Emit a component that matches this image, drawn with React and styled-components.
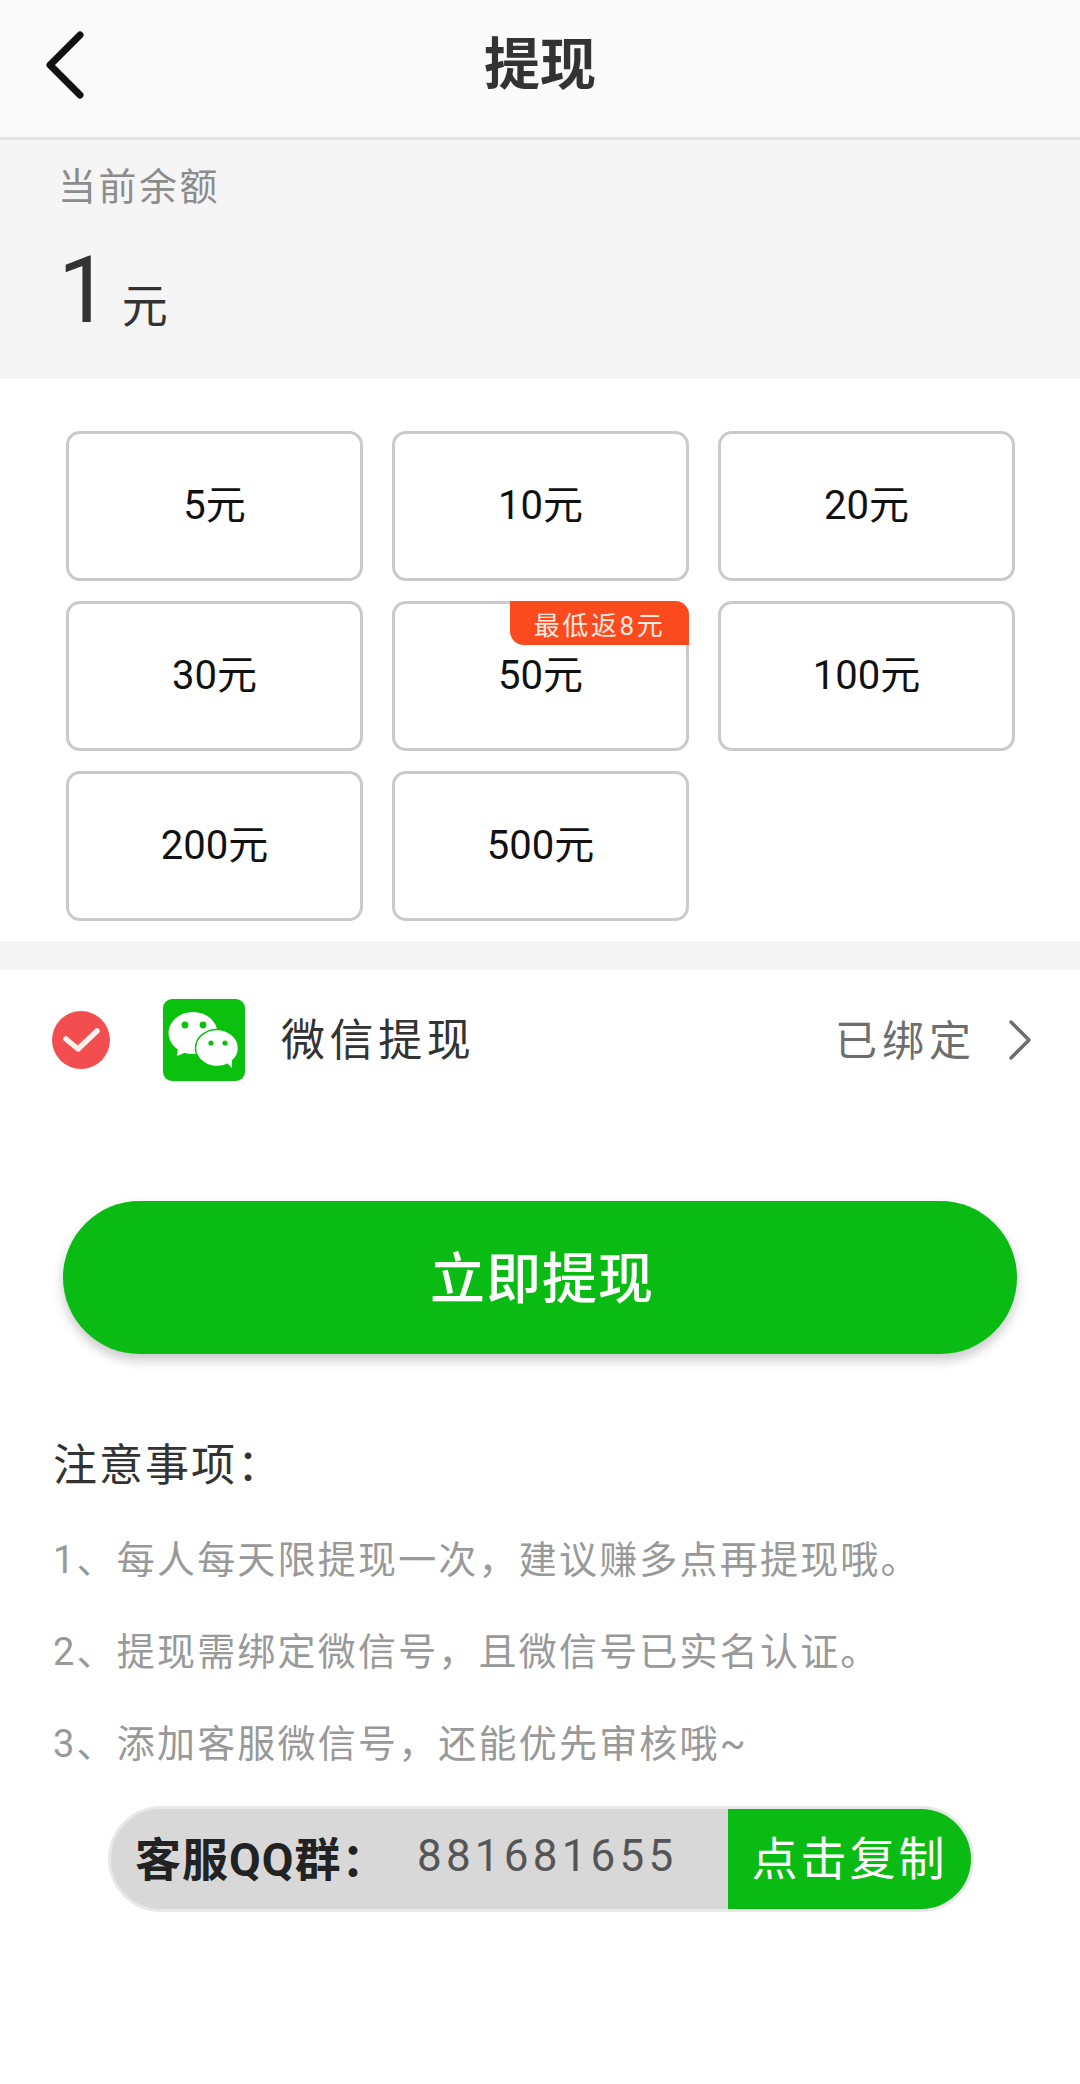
import styled, { createGlobalStyle } from "styled-components";

const GlobalStyle = createGlobalStyle`
  html, body {
    margin: 0;
    padding: 0;
    background: #fff;
    font-family: Roboto, "Noto Sans CJK SC", sans-serif;
  }
  * { box-sizing: border-box; }
`;

const Page = styled.div`
  width: 1080px;
  height: 2084px;
  background: #fff;
  overflow: hidden;
`;

const Header = styled.header`
  height: 140px;
  background: #fafafa;
  border-bottom: 3px solid #e4e4e4;
  display: flex;
  align-items: center;
  justify-content: center;
  position: relative;
`;

const BackIcon = styled.svg`
  position: absolute;
  left: 45px;
  top: 30px;
`;

const Title = styled.h1`
  margin: 0 0 18px;
  font-size: 56px;
  font-weight: 700;
  color: #333;
`;

const Balance = styled.section`
  height: 239px;
  background: #f5f5f5;
  padding: 23px 0 0 58px;
`;

const BalanceLabel = styled.div`
  font-size: 38px;
  line-height: 48px;
  letter-spacing: 2.5px;
  color: #8c8c8c;
`;

const BalanceValue = styled.div`
  display: flex;
  align-items: baseline;
  margin-top: 28px;
  color: #333;
`;

const Amount = styled.span`
  font-size: 92px;
  line-height: 103px;
`;

const Unit = styled.span`
  font-size: 46px;
  margin-left: 12px;
`;

const Options = styled.section`
  display: grid;
  grid-template-columns: repeat(3, 297px);
  grid-auto-rows: 150px;
  column-gap: 29px;
  row-gap: 20px;
  padding: 52px 0 20px 66px;
`;

const Option = styled.div`
  position: relative;
  border: 3px solid #cacaca;
  border-radius: 14px;
  display: flex;
  align-items: center;
  justify-content: center;
  padding-bottom: 8px;
  font-size: 40px;
  color: #111;
`;

const Tag = styled.span`
  position: absolute;
  top: -3px;
  right: -3px;
  width: 179px;
  height: 44px;
  background: #fc4a1f;
  border-radius: 0 14px 0 14px;
  color: #ffe9e0;
  font-size: 26px;
  letter-spacing: 2.6px;
  display: flex;
  align-items: center;
  justify-content: center;
`;

const Divider = styled.div`
  height: 29px;
  background: #f5f5f5;
`;

const PayRow = styled.div`
  height: 141px;
  display: flex;
  align-items: center;
  padding: 0 48px 2px 52px;
`;

const PayIcon = styled.svg`
  margin-left: 53px;
`;

const PayName = styled.span`
  margin: 0 0 6px 36px;
  font-size: 44px;
  letter-spacing: 4.6px;
  color: #333;
`;

const PayStatus = styled.span`
  margin: 0 0 4px auto;
  font-size: 42px;
  letter-spacing: 5px;
  color: #6e6e6e;
`;

const Arrow = styled.svg`
  margin-left: 32px;
`;

const SubmitButton = styled.button`
  display: flex;
  align-items: center;
  justify-content: center;
  width: 954px;
  height: 153px;
  margin: 90px 0 0 63px;
  padding: 0 0 7px 4px;
  border: none;
  border-radius: 77px;
  background: #0abb13;
  box-shadow: 0 6px 12px rgba(0, 0, 0, 0.22);
  color: #fff;
  font-family: inherit;
  font-size: 55px;
  font-weight: 500;
  letter-spacing: 1px;
`;

const Notes = styled.section`
  padding: 82px 0 0 53px;
`;

const NotesTitle = styled.h2`
  margin: 0 0 18px;
  font-size: 44px;
  line-height: 60px;
  font-weight: 400;
  letter-spacing: 2px;
  color: #333;
`;

const NoteLine = styled.p`
  margin: 0;
  font-size: 38px;
  line-height: 92px;
  letter-spacing: 2.2px;
  color: #999;
`;

const QQBar = styled.div`
  display: flex;
  width: 866px;
  height: 106px;
  margin: 16px 0 0 108px;
  background: #d8d8d8;
  border: 3px solid #e8e8e8;
  border-radius: 53px;
  overflow: hidden;
`;

const QQInfo = styled.div`
  flex: 1;
  display: flex;
  align-items: center;
  padding: 0 0 6px 24px;
`;

const QQLabel = styled.span`
  width: 282px;
  font-size: 46px;
  font-weight: 700;
  letter-spacing: 1px;
  white-space: nowrap;
  color: #222;
`;

const QQNumber = styled.span`
  font-size: 44px;
  letter-spacing: 4.2px;
  color: #555;
`;

const CopyButton = styled.div`
  width: 243px;
  background: #0abb13;
  display: flex;
  align-items: center;
  justify-content: center;
  padding-bottom: 8px;
  font-size: 46px;
  letter-spacing: 3px;
  color: #fff;
`;

const amounts = [
  { label: "5元" },
  { label: "10元" },
  { label: "20元" },
  { label: "30元" },
  { label: "50元", tag: "最低返8元" },
  { label: "100元" },
  { label: "200元" },
  { label: "500元" },
];

const notes = [
  "1、每人每天限提现一次，建议赚多点再提现哦。",
  "2、提现需绑定微信号，且微信号已实名认证。",
  "3、添加客服微信号，还能优先审核哦~",
];

function WeChatIcon() {
  return (
    <PayIcon width="82" height="82" viewBox="0 0 82 82">
      <rect width="82" height="82" rx="9" fill="#0ac10e" />
      <ellipse cx="30" cy="34" rx="24.5" ry="21" fill="#fff" />
      <path d="M15 48 L14 57 L26 52 Z" fill="#fff" />
      <ellipse cx="54" cy="49" rx="21.5" ry="18.5" fill="#fff" stroke="#0ac10e" strokeWidth="1.5" />
      <path d="M62 62 L69 69 L69 58 Z" fill="#fff" />
      <circle cx="22" cy="26" r="3.4" fill="#0ac10e" />
      <circle cx="40" cy="26" r="3.4" fill="#0ac10e" />
      <circle cx="48" cy="44" r="2.6" fill="#0ac10e" />
      <circle cx="62" cy="44" r="2.6" fill="#0ac10e" />
    </PayIcon>
  );
}

export default function App() {
  return (
    <Page>
      <GlobalStyle />
      <Header>
        <BackIcon width="46" height="72" viewBox="0 0 46 72">
          <path
            d="M35 5 L5 35 L35 65"
            fill="none"
            stroke="#111"
            strokeWidth="7"
            strokeLinecap="round"
            strokeLinejoin="round"
          />
        </BackIcon>
        <Title>提现</Title>
      </Header>
      <Balance>
        <BalanceLabel>当前余额</BalanceLabel>
        <BalanceValue>
          <Amount>1</Amount>
          <Unit>元</Unit>
        </BalanceValue>
      </Balance>
      <Options>
        {amounts.map((item) => (
          <Option key={item.label}>
            {item.label}
            {item.tag && <Tag>{item.tag}</Tag>}
          </Option>
        ))}
      </Options>
      <Divider />
      <PayRow>
        <svg width="58" height="58" viewBox="0 0 58 58">
          <circle cx="29" cy="29" r="29" fill="#f24e50" />
          <path
            d="M14 28 L26 38 L45 20"
            fill="none"
            stroke="#fdeeee"
            strokeWidth="5.5"
            strokeLinecap="round"
            strokeLinejoin="round"
          />
        </svg>
        <WeChatIcon />
        <PayName>微信提现</PayName>
        <PayStatus>已绑定</PayStatus>
        <Arrow width="24" height="42" viewBox="0 0 24 42">
          <path
            d="M3 3 L21 21 L3 39"
            fill="none"
            stroke="#6e6e6e"
            strokeWidth="3.5"
            strokeLinecap="round"
            strokeLinejoin="round"
          />
        </Arrow>
      </PayRow>
      <SubmitButton>立即提现</SubmitButton>
      <Notes>
        <NotesTitle>注意事项：</NotesTitle>
        {notes.map((line) => (
          <NoteLine key={line}>{line}</NoteLine>
        ))}
      </Notes>
      <QQBar>
        <QQInfo>
          <QQLabel>客服QQ群：</QQLabel>
          <QQNumber>881681655</QQNumber>
        </QQInfo>
        <CopyButton>点击复制</CopyButton>
      </QQBar>
    </Page>
  );
}
